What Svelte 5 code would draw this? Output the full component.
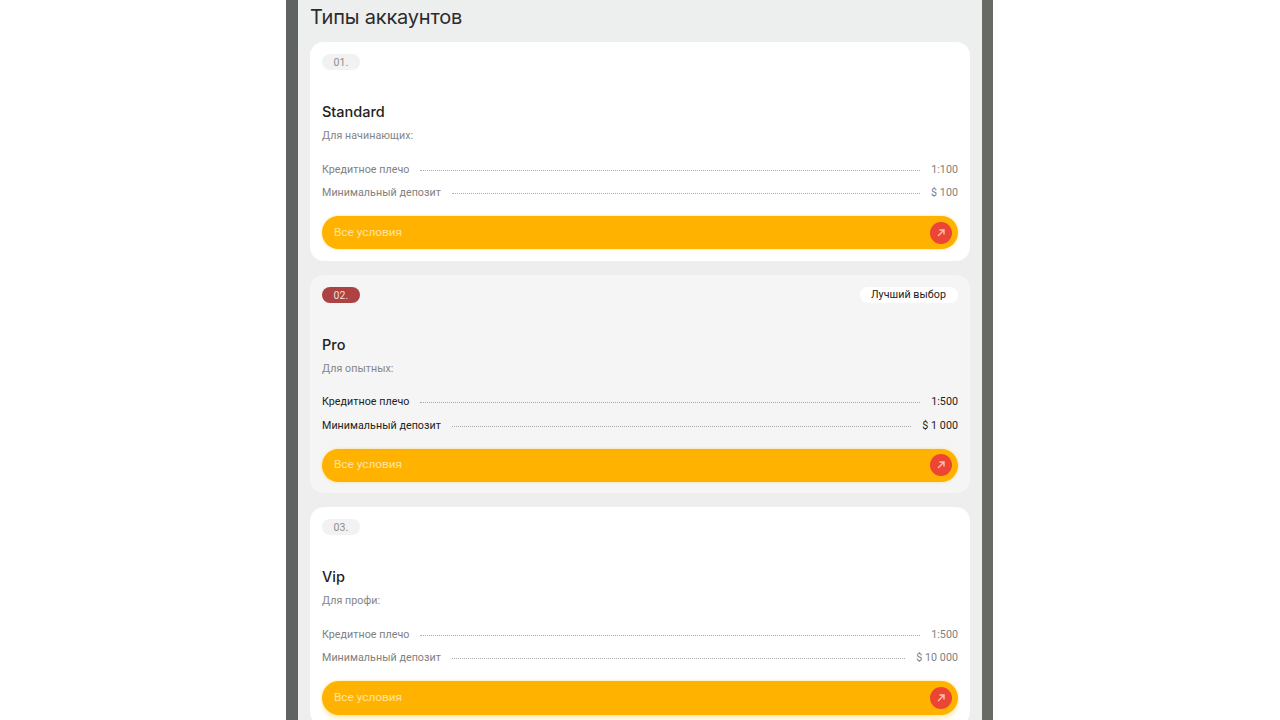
<script>
  const accounts = [
    { num: '01.', name: 'Standard', desc: 'Для начинающих:', leverage: '1:100', deposit: '$ 100' },
    { num: '02.', name: 'Pro', desc: 'Для опытных:', leverage: '1:500', deposit: '$ 1 000', best: true },
    { num: '03.', name: 'Vip', desc: 'Для профи:', leverage: '1:500', deposit: '$ 10 000' }
  ];
</script>

<div class="page">
  <div class="phone">
    <h1>Типы аккаунтов</h1>
    <div class="cards">
      {#each accounts as acc}
        <section class="card" class:best={acc.best}>
          <div class="top">
            <span class="num">{acc.num}</span>
            {#if acc.best}<span class="tag">Лучший выбор</span>{/if}
          </div>
          <h2>{acc.name}</h2>
          <p class="desc">{acc.desc}</p>
          <div class="row">
            <span>Кредитное плечо</span>
            <i></i>
            <span>{acc.leverage}</span>
          </div>
          <div class="row">
            <span>Минимальный депозит</span>
            <i></i>
            <span>{acc.deposit}</span>
          </div>
          <div class="btn">
            <span class="label">Все условия</span>
            <span class="arrow">
              <svg width="10" height="10" viewBox="0 0 10 10" fill="none" stroke="#fbc4b4" stroke-width="1.4">
                <path d="M2 8 L8 2 M3.4 2 H8 V6.6" />
              </svg>
            </span>
          </div>
        </section>
      {/each}
    </div>
  </div>
</div>

<style>
  :global(body) {
    background: #fff;
    overflow: hidden;
  }

  .page {
    display: flex;
    justify-content: center;
    height: 720px;
    overflow: hidden;
    font-family: Roboto, "Noto Sans", sans-serif;
  }

  .phone {
    box-sizing: border-box;
    width: 707px;
    height: 720px;
    margin-left: -1px;
    padding: 0 12px;
    background: linear-gradient(#edefef, #eeeeee 60px);
    border-left: 12px solid #5f6462;
    border-right: 11px solid #686a64;
    overflow: hidden;
  }

  h1 {
    margin: 0;
    height: 42px;
    padding-top: 4px;
    box-sizing: border-box;
    font-family: Inter, sans-serif;
    font-weight: 400;
    font-size: 20px;
    line-height: 26px;
    color: #2c2c2c;
    letter-spacing: -0.2px;
  }

  .cards {
    display: flex;
    flex-direction: column;
    gap: 13.8px;
  }

  .card {
    box-sizing: border-box;
    height: 218.8px;
    flex: none;
    padding: 12px;
    background: #fff;
    border-radius: 14px;
    color: #808080;
  }

  .card.best {
    background: #f5f5f5;
    color: #222;
  }

  .top {
    display: flex;
    justify-content: space-between;
    align-items: center;
    height: 16px;
  }

  .num {
    width: 38px;
    height: 16px;
    border-radius: 8px;
    background: #f2f2f2;
    color: #8c8c8c;
    font-size: 10.5px;
    line-height: 17px;
    text-align: center;
    letter-spacing: 0.2px;
  }

  .best .num {
    background: #ad4242;
    color: #f6dcdc;
  }

  .tag {
    padding: 0 12px 0 11px;
    height: 16px;
    border-radius: 8px;
    background: #fff;
    color: #222;
    font-size: 10.7px;
    line-height: 16px;
    letter-spacing: 0.05px;
  }

  h2 {
    margin: 32px 0 0;
    font-family: Inter, sans-serif;
    font-weight: 500;
    font-size: 14.5px;
    line-height: 20px;
    color: #222;
  }

  .desc {
    margin: 7px 0 0;
    font-size: 10.7px;
    line-height: 14px;
    color: #858585;
    letter-spacing: 0.05px;
  }

  .row {
    display: flex;
    align-items: center;
    gap: 11px;
    height: 14px;
    margin-top: 9.5px;
    font-size: 10.7px;
    line-height: 14px;
    letter-spacing: 0.05px;
  }

  .desc + .row {
    margin-top: 19.6px;
  }

  .row i {
    flex: 1;
    border-top: 1px dotted #aaa;
    margin-top: 1px;
  }

  .btn {
    display: flex;
    justify-content: space-between;
    align-items: center;
    box-sizing: border-box;
    height: 33.5px;
    margin-top: 15.9px;
    padding: 0 6px 0 12px;
    background: #ffb300;
    border-radius: 17px;
    box-shadow: 0 0 3px rgba(255, 200, 60, 0.6);
    color: #ffe3a0;
    font-size: 11.8px;
  }

  .label {
    padding-bottom: 2px;
  }

  .card:last-child .btn {
    box-shadow: 0 0 3px rgba(255, 200, 60, 0.6), 0 6px 5px -1px #fff3d0;
  }

  .arrow {
    display: flex;
    align-items: center;
    justify-content: center;
    width: 22px;
    height: 22px;
    border-radius: 50%;
    background: #ec4534;
  }
</style>
